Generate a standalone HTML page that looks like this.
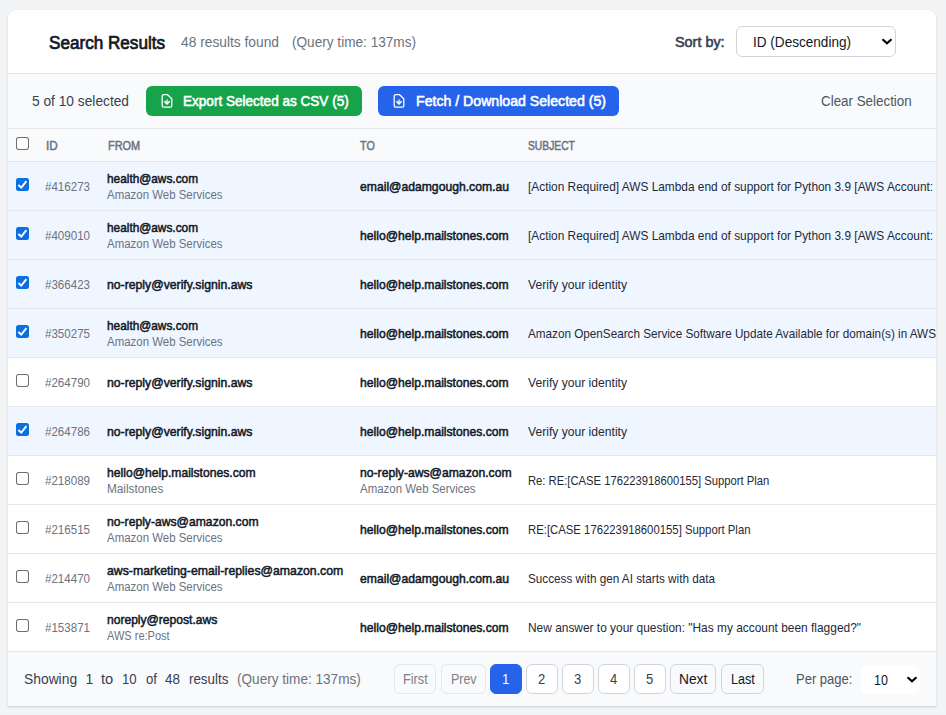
<!DOCTYPE html>
<html><head><meta charset="utf-8"><title>Search Results</title>
<style>
html,body{margin:0;padding:0;}
body{width:946px;height:715px;overflow:hidden;background:#f3f4f6;position:relative;font-family:"Liberation Sans",sans-serif;}
.t{position:absolute;white-space:nowrap;line-height:1;transform-origin:0 0;}
.b{position:absolute;}
#clip{position:absolute;left:0;top:0;width:936px;height:715px;overflow:hidden;}
</style></head><body>
<div class="b" style="left:8px;top:10px;width:928px;height:696px;background:#fff;border-radius:8px 8px 0 0;box-shadow:0 1px 3px rgba(0,0,0,.10),0 1px 2px rgba(0,0,0,.06);"></div>
<div id="clip">
<div class="b" style="left:8px;top:73px;width:928px;height:1px;background:#e5e7eb;"></div>
<div class="b" style="left:8px;top:74px;width:928px;height:54px;background:#f9fafb;"></div>
<div class="b" style="left:8px;top:128px;width:928px;height:1px;background:#e5e7eb;"></div>
<div class="b" style="left:8px;top:129px;width:928px;height:32px;background:#f9fafb;"></div>
<div class="b" style="left:8px;top:161px;width:928px;height:1px;background:#e5e7eb;"></div>
<span class="t" style="left:48.5px;top:34.26px;font-size:18px;color:#111827;-webkit-text-stroke:0.72px #111827;transform:scaleX(0.9504);">Search Results</span>
<span class="t" style="left:181.0px;top:34.95px;font-size:14px;color:#6b7280;transform:scaleX(0.9837);">48 results found</span>
<span class="t" style="left:292.3px;top:34.95px;font-size:14px;color:#6b7280;transform:scaleX(0.9719);">(Query time: 137ms)</span>
<span class="t" style="left:674.5px;top:34.95px;font-size:14px;color:#374151;-webkit-text-stroke:0.56px #374151;transform:scaleX(1.0281);">Sort by:</span>
<div class="b" style="left:736px;top:26px;width:160px;height:31px;background:#fff;border:1px solid #d1d5db;border-radius:6px;box-sizing:border-box;"></div>
<span class="t" style="left:753.0px;top:34.95px;font-size:14px;color:#111827;transform:scaleX(0.9688);">ID (Descending)</span>
<svg class="b" style="left:881px;top:37px" width="12" height="9" viewBox="0 0 12 9"><path d="M1.5 2.2 L6 6.3 L10.5 2.2" fill="none" stroke="#000" stroke-width="2.1"/></svg>
<span class="t" style="left:32.2px;top:93.65px;font-size:14px;color:#374151;transform:scaleX(0.9813);">5 of 10 selected</span>
<div class="b" style="left:146px;top:86px;width:216px;height:30px;background:#16a34a;border-radius:6px;"></div>
<div class="b" style="left:378px;top:86px;width:241px;height:30px;background:#2563eb;border-radius:6px;"></div>
<svg class="b" style="left:161px;top:94px" width="13" height="15" viewBox="0 0 13 15"><path d="M1.2 2.3 Q1.2 0.7 2.7 0.7 H6.6 L10.8 4.7 V11.7 Q10.8 13.1 9.4 13.1 H2.6 Q1.2 13.1 1.2 11.7 Z" fill="none" stroke="#fff" stroke-width="1.3" stroke-linejoin="round"/><path d="M6 5.4 V9.4" fill="none" stroke="#fff" stroke-width="1.3"/><path d="M3.4 7.3 L6 9.9 L8.6 7.3" fill="none" stroke="#fff" stroke-width="1.6" stroke-linejoin="round"/></svg>
<svg class="b" style="left:393px;top:94px" width="13" height="15" viewBox="0 0 13 15"><path d="M1.2 2.3 Q1.2 0.7 2.7 0.7 H6.6 L10.8 4.7 V11.7 Q10.8 13.1 9.4 13.1 H2.6 Q1.2 13.1 1.2 11.7 Z" fill="none" stroke="#fff" stroke-width="1.3" stroke-linejoin="round"/><path d="M6 5.4 V9.4" fill="none" stroke="#fff" stroke-width="1.3"/><path d="M3.4 7.3 L6 9.9 L8.6 7.3" fill="none" stroke="#fff" stroke-width="1.6" stroke-linejoin="round"/></svg>
<span class="t" style="left:182.8px;top:93.65px;font-size:14px;color:#fff;-webkit-text-stroke:0.56px #fff;transform:scaleX(0.9679);">Export Selected as CSV (5)</span>
<span class="t" style="left:415.7px;top:93.65px;font-size:14px;color:#fff;-webkit-text-stroke:0.56px #fff;transform:scaleX(1.0089);">Fetch / Download Selected (5)</span>
<span class="t" style="left:820.8px;top:93.65px;font-size:14px;color:#4b5563;transform:scaleX(0.9553);">Clear Selection</span>
<svg class="b" style="left:16px;top:137px" width="13" height="13" viewBox="0 0 13 13"><rect x="0.5" y="0.5" width="12" height="12" rx="2.2" fill="#fff" stroke="#6f6f6f" stroke-width="1.05"/></svg>
<span class="t" style="left:45.5px;top:139.20px;font-size:13px;color:#6b7280;-webkit-text-stroke:0.52px #6b7280;transform:scaleX(0.9000);">ID</span>
<span class="t" style="left:107.6px;top:139.20px;font-size:13px;color:#6b7280;-webkit-text-stroke:0.52px #6b7280;transform:scaleX(0.8388);">FROM</span>
<span class="t" style="left:359.8px;top:139.20px;font-size:13px;color:#6b7280;-webkit-text-stroke:0.52px #6b7280;transform:scaleX(0.8306);">TO</span>
<span class="t" style="left:527.8px;top:139.20px;font-size:13px;color:#6b7280;-webkit-text-stroke:0.52px #6b7280;transform:scaleX(0.7918);">SUBJECT</span>
<div class="b" style="left:8px;top:162px;width:928px;height:48px;background:#eff6ff;"></div>
<div class="b" style="left:8px;top:210px;width:928px;height:1px;background:#e5e7eb;"></div>
<svg class="b" style="left:16px;top:178px" width="13" height="13" viewBox="0 0 13 13"><rect x="0" y="0" width="13" height="13" rx="2.5" fill="#0b6fe0"/><path d="M2.4 7 L5.3 9.7 L10.4 3.1" fill="none" stroke="#fff" stroke-width="1.9"/></svg>
<span class="t" style="left:45.3px;top:179.70px;font-size:13px;color:#6b7280;transform:scaleX(0.8890);">#416273</span>
<span class="t" style="left:107.4px;top:171.90px;font-size:13px;color:#111827;-webkit-text-stroke:0.52px #111827;transform:scaleX(0.9108);">health@aws.com</span>
<span class="t" style="left:107.4px;top:188.64px;font-size:12px;color:#6b7280;transform:scaleX(0.9541);">Amazon Web Services</span>
<span class="t" style="left:359.8px;top:179.70px;font-size:13px;color:#111827;-webkit-text-stroke:0.52px #111827;transform:scaleX(0.9361);">email@adamgough.com.au</span>
<span class="t" style="left:528.0px;top:179.70px;font-size:13px;color:#1f2937;transform:scaleX(0.9135);">[Action Required] AWS Lambda end of support for Python 3.9 [AWS Account: 123456789012]</span>
<div class="b" style="left:8px;top:211px;width:928px;height:48px;background:#eff6ff;"></div>
<div class="b" style="left:8px;top:259px;width:928px;height:1px;background:#e5e7eb;"></div>
<svg class="b" style="left:16px;top:227px" width="13" height="13" viewBox="0 0 13 13"><rect x="0" y="0" width="13" height="13" rx="2.5" fill="#0b6fe0"/><path d="M2.4 7 L5.3 9.7 L10.4 3.1" fill="none" stroke="#fff" stroke-width="1.9"/></svg>
<span class="t" style="left:45.3px;top:228.70px;font-size:13px;color:#6b7280;transform:scaleX(0.8890);">#409010</span>
<span class="t" style="left:107.4px;top:220.90px;font-size:13px;color:#111827;-webkit-text-stroke:0.52px #111827;transform:scaleX(0.9108);">health@aws.com</span>
<span class="t" style="left:107.4px;top:237.64px;font-size:12px;color:#6b7280;transform:scaleX(0.9541);">Amazon Web Services</span>
<span class="t" style="left:359.8px;top:228.70px;font-size:13px;color:#111827;-webkit-text-stroke:0.52px #111827;transform:scaleX(0.9336);">hello@help.mailstones.com</span>
<span class="t" style="left:528.0px;top:228.70px;font-size:13px;color:#1f2937;transform:scaleX(0.9135);">[Action Required] AWS Lambda end of support for Python 3.9 [AWS Account: 123456789012]</span>
<div class="b" style="left:8px;top:260px;width:928px;height:48px;background:#eff6ff;"></div>
<div class="b" style="left:8px;top:308px;width:928px;height:1px;background:#e5e7eb;"></div>
<svg class="b" style="left:16px;top:276px" width="13" height="13" viewBox="0 0 13 13"><rect x="0" y="0" width="13" height="13" rx="2.5" fill="#0b6fe0"/><path d="M2.4 7 L5.3 9.7 L10.4 3.1" fill="none" stroke="#fff" stroke-width="1.9"/></svg>
<span class="t" style="left:45.3px;top:277.70px;font-size:13px;color:#6b7280;transform:scaleX(0.8890);">#366423</span>
<span class="t" style="left:107.4px;top:277.70px;font-size:13px;color:#111827;-webkit-text-stroke:0.52px #111827;transform:scaleX(0.9413);">no-reply@verify.signin.aws</span>
<span class="t" style="left:359.8px;top:277.70px;font-size:13px;color:#111827;-webkit-text-stroke:0.52px #111827;transform:scaleX(0.9336);">hello@help.mailstones.com</span>
<span class="t" style="left:528.0px;top:277.70px;font-size:13px;color:#1f2937;transform:scaleX(0.9320);">Verify your identity</span>
<div class="b" style="left:8px;top:309px;width:928px;height:48px;background:#eff6ff;"></div>
<div class="b" style="left:8px;top:357px;width:928px;height:1px;background:#e5e7eb;"></div>
<svg class="b" style="left:16px;top:325px" width="13" height="13" viewBox="0 0 13 13"><rect x="0" y="0" width="13" height="13" rx="2.5" fill="#0b6fe0"/><path d="M2.4 7 L5.3 9.7 L10.4 3.1" fill="none" stroke="#fff" stroke-width="1.9"/></svg>
<span class="t" style="left:45.3px;top:326.70px;font-size:13px;color:#6b7280;transform:scaleX(0.8890);">#350275</span>
<span class="t" style="left:107.4px;top:318.90px;font-size:13px;color:#111827;-webkit-text-stroke:0.52px #111827;transform:scaleX(0.9108);">health@aws.com</span>
<span class="t" style="left:107.4px;top:335.64px;font-size:12px;color:#6b7280;transform:scaleX(0.9541);">Amazon Web Services</span>
<span class="t" style="left:359.8px;top:326.70px;font-size:13px;color:#111827;-webkit-text-stroke:0.52px #111827;transform:scaleX(0.9336);">hello@help.mailstones.com</span>
<span class="t" style="left:528.0px;top:326.70px;font-size:13px;color:#1f2937;transform:scaleX(0.9005);">Amazon OpenSearch Service Software Update Available for domain(s) in AWS Region</span>
<div class="b" style="left:8px;top:406px;width:928px;height:1px;background:#e5e7eb;"></div>
<svg class="b" style="left:16px;top:374px" width="13" height="13" viewBox="0 0 13 13"><rect x="0.5" y="0.5" width="12" height="12" rx="2.2" fill="#fff" stroke="#6f6f6f" stroke-width="1.05"/></svg>
<span class="t" style="left:45.3px;top:375.70px;font-size:13px;color:#6b7280;transform:scaleX(0.8890);">#264790</span>
<span class="t" style="left:107.4px;top:375.70px;font-size:13px;color:#111827;-webkit-text-stroke:0.52px #111827;transform:scaleX(0.9413);">no-reply@verify.signin.aws</span>
<span class="t" style="left:359.8px;top:375.70px;font-size:13px;color:#111827;-webkit-text-stroke:0.52px #111827;transform:scaleX(0.9336);">hello@help.mailstones.com</span>
<span class="t" style="left:528.0px;top:375.70px;font-size:13px;color:#1f2937;transform:scaleX(0.9320);">Verify your identity</span>
<div class="b" style="left:8px;top:407px;width:928px;height:48px;background:#eff6ff;"></div>
<div class="b" style="left:8px;top:455px;width:928px;height:1px;background:#e5e7eb;"></div>
<svg class="b" style="left:16px;top:423px" width="13" height="13" viewBox="0 0 13 13"><rect x="0" y="0" width="13" height="13" rx="2.5" fill="#0b6fe0"/><path d="M2.4 7 L5.3 9.7 L10.4 3.1" fill="none" stroke="#fff" stroke-width="1.9"/></svg>
<span class="t" style="left:45.3px;top:424.70px;font-size:13px;color:#6b7280;transform:scaleX(0.8890);">#264786</span>
<span class="t" style="left:107.4px;top:424.70px;font-size:13px;color:#111827;-webkit-text-stroke:0.52px #111827;transform:scaleX(0.9413);">no-reply@verify.signin.aws</span>
<span class="t" style="left:359.8px;top:424.70px;font-size:13px;color:#111827;-webkit-text-stroke:0.52px #111827;transform:scaleX(0.9336);">hello@help.mailstones.com</span>
<span class="t" style="left:528.0px;top:424.70px;font-size:13px;color:#1f2937;transform:scaleX(0.9320);">Verify your identity</span>
<div class="b" style="left:8px;top:504px;width:928px;height:1px;background:#e5e7eb;"></div>
<svg class="b" style="left:16px;top:472px" width="13" height="13" viewBox="0 0 13 13"><rect x="0.5" y="0.5" width="12" height="12" rx="2.2" fill="#fff" stroke="#6f6f6f" stroke-width="1.05"/></svg>
<span class="t" style="left:45.3px;top:473.70px;font-size:13px;color:#6b7280;transform:scaleX(0.8890);">#218089</span>
<span class="t" style="left:107.4px;top:465.90px;font-size:13px;color:#111827;-webkit-text-stroke:0.52px #111827;transform:scaleX(0.9336);">hello@help.mailstones.com</span>
<span class="t" style="left:107.4px;top:482.64px;font-size:12px;color:#6b7280;transform:scaleX(0.9815);">Mailstones</span>
<span class="t" style="left:359.8px;top:465.90px;font-size:13px;color:#111827;-webkit-text-stroke:0.52px #111827;transform:scaleX(0.9356);">no-reply-aws@amazon.com</span>
<span class="t" style="left:359.8px;top:482.64px;font-size:12px;color:#6b7280;transform:scaleX(0.9541);">Amazon Web Services</span>
<span class="t" style="left:528.0px;top:473.70px;font-size:13px;color:#1f2937;transform:scaleX(0.8649);">Re: RE:[CASE 176223918600155] Support Plan</span>
<div class="b" style="left:8px;top:553px;width:928px;height:1px;background:#e5e7eb;"></div>
<svg class="b" style="left:16px;top:521px" width="13" height="13" viewBox="0 0 13 13"><rect x="0.5" y="0.5" width="12" height="12" rx="2.2" fill="#fff" stroke="#6f6f6f" stroke-width="1.05"/></svg>
<span class="t" style="left:45.3px;top:522.70px;font-size:13px;color:#6b7280;transform:scaleX(0.8890);">#216515</span>
<span class="t" style="left:107.4px;top:514.90px;font-size:13px;color:#111827;-webkit-text-stroke:0.52px #111827;transform:scaleX(0.9356);">no-reply-aws@amazon.com</span>
<span class="t" style="left:107.4px;top:531.64px;font-size:12px;color:#6b7280;transform:scaleX(0.9541);">Amazon Web Services</span>
<span class="t" style="left:359.8px;top:522.70px;font-size:13px;color:#111827;-webkit-text-stroke:0.52px #111827;transform:scaleX(0.9336);">hello@help.mailstones.com</span>
<span class="t" style="left:528.0px;top:522.70px;font-size:13px;color:#1f2937;transform:scaleX(0.8721);">RE:[CASE 176223918600155] Support Plan</span>
<div class="b" style="left:8px;top:602px;width:928px;height:1px;background:#e5e7eb;"></div>
<svg class="b" style="left:16px;top:570px" width="13" height="13" viewBox="0 0 13 13"><rect x="0.5" y="0.5" width="12" height="12" rx="2.2" fill="#fff" stroke="#6f6f6f" stroke-width="1.05"/></svg>
<span class="t" style="left:45.3px;top:571.70px;font-size:13px;color:#6b7280;transform:scaleX(0.8890);">#214470</span>
<span class="t" style="left:107.4px;top:563.90px;font-size:13px;color:#111827;-webkit-text-stroke:0.52px #111827;transform:scaleX(0.9446);">aws-marketing-email-replies@amazon.com</span>
<span class="t" style="left:107.4px;top:580.64px;font-size:12px;color:#6b7280;transform:scaleX(0.9541);">Amazon Web Services</span>
<span class="t" style="left:359.8px;top:571.70px;font-size:13px;color:#111827;-webkit-text-stroke:0.52px #111827;transform:scaleX(0.9361);">email@adamgough.com.au</span>
<span class="t" style="left:528.0px;top:571.70px;font-size:13px;color:#1f2937;transform:scaleX(0.9017);">Success with gen AI starts with data</span>
<div class="b" style="left:8px;top:651px;width:928px;height:1px;background:#e5e7eb;"></div>
<svg class="b" style="left:16px;top:619px" width="13" height="13" viewBox="0 0 13 13"><rect x="0.5" y="0.5" width="12" height="12" rx="2.2" fill="#fff" stroke="#6f6f6f" stroke-width="1.05"/></svg>
<span class="t" style="left:45.3px;top:620.70px;font-size:13px;color:#6b7280;transform:scaleX(0.8890);">#153871</span>
<span class="t" style="left:107.4px;top:612.90px;font-size:13px;color:#111827;-webkit-text-stroke:0.52px #111827;transform:scaleX(0.9284);">noreply@repost.aws</span>
<span class="t" style="left:107.4px;top:629.64px;font-size:12px;color:#6b7280;transform:scaleX(0.9174);">AWS re:Post</span>
<span class="t" style="left:359.8px;top:620.70px;font-size:13px;color:#111827;-webkit-text-stroke:0.52px #111827;transform:scaleX(0.9336);">hello@help.mailstones.com</span>
<span class="t" style="left:528.0px;top:620.70px;font-size:13px;color:#1f2937;transform:scaleX(0.9165);">New answer to your question: &quot;Has my account been flagged?&quot;</span>
<div class="b" style="left:8px;top:652px;width:928px;height:54px;background:#f9fafb;"></div>
<span class="t" style="left:23.7px;top:671.95px;font-size:14px;color:#374151;transform:scaleX(0.9887);">Showing</span>
<span class="t" style="left:85.5px;top:671.95px;font-size:14px;color:#374151;">1</span>
<span class="t" style="left:101.2px;top:671.95px;font-size:14px;color:#374151;transform:scaleX(1.0449);">to</span>
<span class="t" style="left:122.0px;top:671.95px;font-size:14px;color:#374151;transform:scaleX(0.9375);">10</span>
<span class="t" style="left:145.6px;top:671.95px;font-size:14px;color:#374151;transform:scaleX(0.9421);">of</span>
<span class="t" style="left:165.3px;top:671.95px;font-size:14px;color:#374151;transform:scaleX(0.9568);">48</span>
<span class="t" style="left:188.9px;top:671.95px;font-size:14px;color:#374151;transform:scaleX(0.9531);">results</span>
<span class="t" style="left:237.3px;top:671.95px;font-size:14px;color:#6b7280;transform:scaleX(0.9703);">(Query time: 137ms)</span>
<div class="b" style="left:394px;top:664px;width:42px;height:30px;background:#f9fafb;border:1px solid #e5e7eb;border-radius:6px;box-sizing:border-box;"></div>
<span class="t" style="left:402.6px;top:671.95px;font-size:14px;color:#7d8189;transform:scaleX(0.9076);">First</span>
<div class="b" style="left:441px;top:664px;width:45px;height:30px;background:#f9fafb;border:1px solid #e5e7eb;border-radius:6px;box-sizing:border-box;"></div>
<span class="t" style="left:450.7px;top:671.95px;font-size:14px;color:#7d8189;transform:scaleX(0.8893);">Prev</span>
<div class="b" style="left:490px;top:664px;width:32px;height:30px;background:#2563eb;border:1px solid #2563eb;border-radius:6px;box-sizing:border-box;"></div>
<span class="t" style="left:502.4px;top:671.95px;font-size:14px;color:#fff;transform:scaleX(0.9300);">1</span>
<div class="b" style="left:526px;top:664px;width:32px;height:30px;background:#fff;border:1px solid #d1d5db;border-radius:6px;box-sizing:border-box;"></div>
<span class="t" style="left:538.4px;top:671.95px;font-size:14px;color:#374151;transform:scaleX(0.9300);">2</span>
<div class="b" style="left:562px;top:664px;width:32px;height:30px;background:#fff;border:1px solid #d1d5db;border-radius:6px;box-sizing:border-box;"></div>
<span class="t" style="left:574.4px;top:671.95px;font-size:14px;color:#374151;transform:scaleX(0.9300);">3</span>
<div class="b" style="left:598px;top:664px;width:32px;height:30px;background:#fff;border:1px solid #d1d5db;border-radius:6px;box-sizing:border-box;"></div>
<span class="t" style="left:610.4px;top:671.95px;font-size:14px;color:#374151;transform:scaleX(0.9300);">4</span>
<div class="b" style="left:634px;top:664px;width:32px;height:30px;background:#fff;border:1px solid #d1d5db;border-radius:6px;box-sizing:border-box;"></div>
<span class="t" style="left:646.4px;top:671.95px;font-size:14px;color:#374151;transform:scaleX(0.9300);">5</span>
<div class="b" style="left:670px;top:664px;width:46px;height:30px;background:#f9fafb;border:1px solid #d1d5db;border-radius:6px;box-sizing:border-box;"></div>
<span class="t" style="left:678.9px;top:671.95px;font-size:14px;color:#111827;transform:scaleX(0.9831);">Next</span>
<div class="b" style="left:721px;top:664px;width:43px;height:30px;background:#f9fafb;border:1px solid #d1d5db;border-radius:6px;box-sizing:border-box;"></div>
<span class="t" style="left:730.6px;top:671.95px;font-size:14px;color:#111827;transform:scaleX(0.8994);">Last</span>
<span class="t" style="left:796.4px;top:671.95px;font-size:14px;color:#4b5563;transform:scaleX(0.9273);">Per page:</span>
<div class="b" style="left:861px;top:665px;width:59px;height:29px;background:#fff;border-radius:6px;"></div>
<span class="t" style="left:874.0px;top:672.75px;font-size:14px;color:#111827;transform:scaleX(0.8926);">10</span>
<svg class="b" style="left:906px;top:675px" width="12" height="9" viewBox="0 0 12 9"><path d="M1.5 2.2 L6 6.3 L10.5 2.2" fill="none" stroke="#000" stroke-width="2.1"/></svg>
</div>
</body></html>
